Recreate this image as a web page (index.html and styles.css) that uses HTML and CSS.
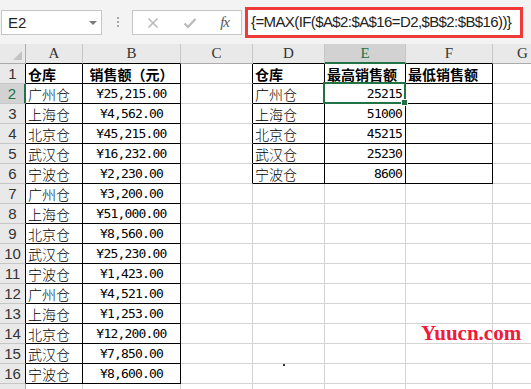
FILE: index.html
```html
<!DOCTYPE html>
<html lang="zh-CN">
<head>
    <meta charset="UTF-8">
    <meta name="viewport" content="width=device-width, initial-scale=1.0">
    <title>最高销售额 - 数组公式</title>
    <link rel="stylesheet" href="styles.css">
</head>
<body>
    <div class="page">
        <div class="toolbar">
            <div class="namebox">
                <span>E2</span>
                <svg class="caret" width="8" height="4" viewBox="0 0 8 4"><path d="M0 0H8L4 4Z" fill="#7a7a7a"/></svg>
            </div>
            <div class="grip"><i></i><i></i><i></i></div>
            <div class="fxbtns">
                <svg width="12" height="12" viewBox="0 0 12 12"><path d="M1.5 1.5L10.5 10.5M10.5 1.5L1.5 10.5" stroke="#b9b9b9" stroke-width="1.6"/></svg>
                <svg width="14" height="12" viewBox="0 0 14 12"><path d="M1.5 6.5L5 10L12.5 2" stroke="#b9b9b9" stroke-width="2.2" fill="none"/></svg>
                <span class="fx">fx</span>
            </div>
            <div class="formula">{=MAX(IF($A$2:$A$16=D2,$B$2:$B$16))}</div>
        </div>

        <div class="sheet" id="sheet"></div>

        <div class="watermark">Yuucn.com</div>
        <div class="speck"></div>
    </div>

    <script>
        const cols = ['A', 'B', 'C', 'D', 'E', 'F', 'G'];

        const sales = [
            ['广州仓', '¥25,215.00'], ['上海仓', '¥4,562.00'], ['北京仓', '¥45,215.00'],
            ['武汉仓', '¥16,232.00'], ['宁波仓', '¥2,230.00'], ['广州仓', '¥3,200.00'],
            ['上海仓', '¥51,000.00'], ['北京仓', '¥8,560.00'], ['武汉仓', '¥25,230.00'],
            ['宁波仓', '¥1,423.00'], ['广州仓', '¥4,521.00'], ['上海仓', '¥1,253.00'],
            ['北京仓', '¥12,200.00'], ['武汉仓', '¥7,850.00'], ['宁波仓', '¥8,600.00']
        ];

        const summary = [
            ['广州仓', 25215], ['上海仓', 51000], ['北京仓', 45215],
            ['武汉仓', 25230], ['宁波仓', 8600]
        ];

        function cell(cls, text) {
            return `<div class="cell ${cls}">${text || ''}</div>`;
        }

        function buildSheet() {
            let html = '<div class="corner"><span></span></div>';
            cols.forEach(c => {
                let cls = 'colhead';
                if (c === 'E') cls += ' active';
                else if ('ABDF'.includes(c)) cls += ' bb';
                html += `<div class="${cls}">${c}</div>`;
            });

            for (let r = 1; r <= 17; r++) {
                let head = 'rowhead';
                if (r === 2) head += ' active';
                else if (r <= 16) head += ' rb';
                html += `<div class="${head}">${r}</div>`;

                let a = '', b = '';
                if (r === 1) { a = '仓库'; b = '销售额（元）'; }
                else if (r <= 16) { a = sales[r - 2][0]; b = sales[r - 2][1]; }
                let edge = r <= 16 ? ' rb bb' : '';
                html += cell((r === 1 ? 'bold' : 'cn') + edge, a);
                html += cell((r === 1 ? 'bold center' : 'money center') + edge, b);

                html += cell(r <= 6 ? 'rb' : '', '');

                let d = '', e = '', f = '';
                if (r === 1) { d = '仓库'; e = '最高销售额'; f = '最低销售额'; }
                else if (r <= 6) { d = summary[r - 2][0]; e = summary[r - 2][1]; }
                let box = r <= 6 ? ' rb bb' : '';
                html += cell((r === 1 ? 'bold' : 'cn') + box, d);
                html += cell((r === 1 ? 'bold' : 'money right') + box + (r === 2 ? ' sel' : ''), e);
                html += cell((r === 1 ? 'bold' : 'cn') + box, f);
                html += cell('', '');
            }
            document.getElementById('sheet').innerHTML = html;
        }

        buildSheet();
    </script>
</body>
</html>
```

FILE: styles.css
```css
body { margin: 0; background: #ffffff; font-family: "Liberation Sans", Arial, sans-serif; overflow: hidden; }
.page { position: relative; width: 531px; height: 389px; overflow: hidden; }

/* formula bar */
.toolbar { display: flex; align-items: flex-start; height: 44px; background: #f3f3f3; }
.namebox { display: flex; align-items: center; justify-content: space-between; box-sizing: border-box; width: 101px; height: 25px; margin: 10px 0 0 1px; padding: 0 4px 0 6px; background: #fff; border: 1px solid #c6c6c6; font-size: 15px; color: #222; }
.namebox .caret { margin-top: 1px; }
.grip { display: flex; flex-direction: column; gap: 2px; margin: 17px 0 0 15px; }
.grip i { display: block; width: 2px; height: 2px; background: #a8a8a8; }
.fxbtns { display: flex; align-items: center; justify-content: space-between; box-sizing: border-box; width: 110px; height: 25px; margin: 10px 0 0 13px; padding: 0 12px 0 14px; background: #fff; border: 1px solid #c6c6c6; }
.fxbtns .fx { font-family: "Liberation Serif", serif; font-style: italic; font-size: 15px; color: #555; letter-spacing: -1px; }
.formula { box-sizing: border-box; width: 278px; height: 31px; margin: 7px 0 0 3px; padding: 3px 0 0 3px; background: #fff; border: 3px solid #ef3a3a; font-size: 15px; letter-spacing: -0.6px; color: #222; white-space: nowrap; }

/* sheet grid */
.sheet { display: grid; grid-template-columns: 26px 57px 98px 72px 72px 81px 87px 60px; grid-auto-rows: 20px; }
.sheet > div { box-sizing: border-box; display: flex; align-items: center; white-space: nowrap; border-right: 1px solid #d4d4d4; border-bottom: 1px solid #d4d4d4; }
.corner { position: relative; background: #e9e9e9; border-right-color: #ababab !important; border-bottom-color: #ababab !important; }
.corner span { position: absolute; right: 3px; bottom: 3px; width: 0; height: 0; border-left: 9px solid transparent; border-bottom: 9px solid #c3c3c3; }
.colhead { justify-content: center; background: #e9e9e9; font-family: "Liberation Serif", serif; font-size: 15px; color: #333; border-right-color: #c6c6c6 !important; border-bottom-color: #ababab !important; }
.rowhead { justify-content: center; background: #e9e9e9; font-size: 15px; color: #333; border-right-color: #ababab !important; border-bottom-color: #c6c6c6 !important; }
.colhead.active { background: #d2d2d2; color: #217346; border-bottom: 2px solid #217346 !important; }
.rowhead.active { background: #d2d2d2; color: #217346; border-right: 2px solid #217346 !important; }
.sheet > .rb { border-right-color: #000 !important; }
.sheet > .bb { border-bottom-color: #000 !important; }

.cell { padding: 0 2px; font-family: "Noto Sans CJK SC", sans-serif; font-size: 14px; font-weight: 300; color: #000; }
.cell.bold { font-weight: 700; }
.cell.center { justify-content: center; }
.cell.right { justify-content: flex-end; padding-right: 3px; }
.cell.money { font-family: "DejaVu Sans Mono", "Liberation Mono", monospace; font-size: 13px; font-weight: 400; letter-spacing: -0.8px; }

/* active cell */
.sel { position: relative; }
.sel::after { content: ""; position: absolute; left: -2px; top: -2px; right: -1px; bottom: -1px; border: 2px solid #217346; z-index: 2; }
.sel::before { content: ""; position: absolute; right: -3px; bottom: -3px; width: 5px; height: 5px; background: #217346; border: 1px solid #fff; z-index: 3; }

.watermark { position: absolute; left: 421px; top: 323px; font-family: "Liberation Serif", serif; font-size: 21px; font-weight: 600; line-height: 1; color: #f01a3a; }
.speck { position: absolute; left: 283px; top: 364px; width: 2px; height: 2px; background: #333; }
```
